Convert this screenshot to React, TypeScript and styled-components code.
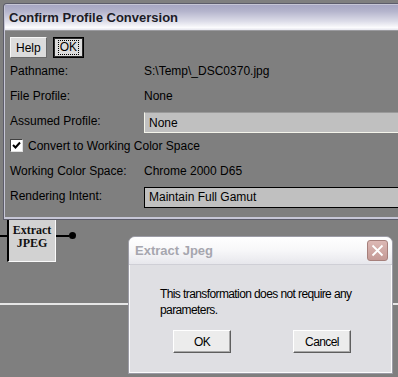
import React from 'react';
import styled, { createGlobalStyle } from 'styled-components';

const GlobalStyle = createGlobalStyle`
  html, body {
    margin: 0;
    padding: 0;
  }
  body {
    width: 398px;
    height: 377px;
    overflow: hidden;
    background: #7f7f7f;
    font-family: "Liberation Sans", Arial, sans-serif;
  }
`;

const Screen = styled.div`
  position: relative;
  width: 398px;
  height: 377px;
  overflow: hidden;
  padding: 4px 0 0 4px;
  box-sizing: border-box;
`;

const ProfileWindow = styled.div`
  width: 430px;
  border: 1px solid #c6c6d6;
  border-bottom-width: 2px;
  border-radius: 3px 3px 0 0;
  box-shadow: 0 0 0 1px #5c5c6a;
  background: #7f7f7f;
`;

const TitleBar = styled.div`
  height: 25px;
  display: flex;
  align-items: center;
  padding-left: 4px;
  border-bottom: 1px solid #9a9a9e;
  background: linear-gradient(#a6a6c2 0%, #b4b4cc 25%, #dcdce8 65%, #fbfbfd 90%, #e6e6ee 100%);
  font-size: 13px;
  font-weight: bold;
  color: #1c1c26;
`;

const Body = styled.div`
  padding: 6px 0 9px 5px;
`;

const Toolbar = styled.div`
  display: flex;
  gap: 6px;
  height: 21px;
`;

const ToolButton = styled.div<{ $focused?: boolean }>`
  height: 21px;
  box-sizing: border-box;
  display: flex;
  align-items: center;
  justify-content: center;
  padding: 0 5px;
  font-size: 12px;
  color: #000;
  background: #dcdcdc;
  border: 1px solid;
  border-color: ${p => (p.$focused ? '#000' : '#f6f6f6 #6a6a6a #6a6a6a #f6f6f6')};
  ${p => p.$focused && 'outline: 1px solid #2a2a2a; outline-offset: -2px;'}
`;

const FocusText = styled.span`
  outline: 1px dotted #000;
  line-height: 13px;
  padding: 0 1px;
`;

const Form = styled.div`
  display: grid;
  grid-template-columns: 134px 1fr;
  grid-auto-rows: 25px;
  align-items: center;
  font-size: 12px;
  color: #000;
`;

const Label = styled.div`
  white-space: nowrap;
`;

const Value = styled.div`
  white-space: nowrap;
`;

const Select = styled.div<{ $framed?: boolean }>`
  height: 21px;
  box-sizing: border-box;
  display: flex;
  align-items: center;
  padding-left: 4px;
  margin-top: ${p => (p.$framed ? '3px' : '4px')};
  background: #c0c0c0;
  border: 1px solid;
  border-color: ${p => (p.$framed ? '#000' : '#9a9a9a #c0c0c0 #f4f4ea #f4f4ea')};
  white-space: nowrap;
`;

const CheckRow = styled.label`
  grid-column: 1 / span 2;
  display: flex;
  align-items: center;
  gap: 5px;
`;

const CheckBox = styled.span`
  width: 13px;
  height: 13px;
  box-sizing: border-box;
  background: #fff;
  border: 1px solid;
  border-color: #404040 #e0e0e0 #e0e0e0 #404040;
  display: flex;
  align-items: center;
  justify-content: center;
`;

const Canvas = styled.div`
  padding-top: 1px;
`;

const NodeRow = styled.div`
  display: flex;
  align-items: flex-start;
  margin-left: -4px;
`;

const Stub = styled.div<{ $w: number }>`
  width: ${p => p.$w}px;
  height: 2px;
  margin-top: 15px;
  background: #000;
`;

const Node = styled.div`
  width: 49px;
  height: 42px;
  box-sizing: border-box;
  border-left: 2px solid #000;
  border-right: 1px solid #fafafa;
  border-bottom: 1px solid #fafafa;
  background: #d2d2d2;
  display: flex;
  flex-direction: column;
  align-items: center;
  padding-top: 4px;
  font-family: "Liberation Serif", "Times New Roman", serif;
  font-weight: bold;
  font-size: 12px;
  line-height: 13px;
  color: #111;
`;

const Dot = styled.div`
  width: 7px;
  height: 7px;
  margin-top: 12px;
  border-radius: 50%;
  background: #000;
`;

const Wire = styled.div`
  height: 2px;
  margin-top: 41px;
  margin-left: -4px;
  width: 402px;
  background: #e6e6e6;
`;

const Dialog = styled.div`
  position: absolute;
  left: 128px;
  top: 236px;
  width: 265px;
  height: 138px;
  box-sizing: border-box;
  border: 1px solid #9c9ca6;
  border-radius: 7px 7px 0 0;
  background: #dfdfe3;
  display: flex;
  flex-direction: column;
  overflow: hidden;
`;

const DialogTitle = styled.div`
  height: 27px;
  flex: none;
  display: flex;
  align-items: center;
  justify-content: space-between;
  padding: 0 4px 0 6px;
  background: linear-gradient(#ffffff 0%, #f7f7f9 50%, #e7e7ec 100%);
  border-bottom: 1px solid #cfcfd6;
  font-size: 13px;
  font-weight: bold;
  color: #a6a6ae;
`;

const CloseButton = styled.div`
  width: 21px;
  height: 21px;
  box-sizing: border-box;
  border: 1px solid #a6807c;
  border-radius: 3px;
  background: linear-gradient(#dcb8b4, #c49a96);
  display: flex;
  align-items: center;
  justify-content: center;
`;

const DialogBody = styled.div`
  flex: 1;
  border: 1px solid #fbfbfb;
  border-top: none;
  padding: 21px 0 0 30px;
  font-size: 12px;
  letter-spacing: -0.6px;
  line-height: 16px;
  color: #000;
`;

const DialogActions = styled.div`
  display: flex;
  gap: 62px;
  margin-top: 12px;
  padding-left: 13px;
`;

const PushButton = styled.div`
  width: 58px;
  height: 23px;
  box-sizing: border-box;
  display: flex;
  align-items: center;
  justify-content: center;
  background: #ececec;
  border: 1px solid;
  border-color: #ffffff #5e5e5e #5e5e5e #ffffff;
  box-shadow: inset -1px -1px 0 #a8a8a8;
  font-size: 12px;
  letter-spacing: -0.6px;
`;

const App: React.FC = () => {
  return (
    <Screen>
      <GlobalStyle />
      <ProfileWindow>
        <TitleBar>Confirm Profile Conversion</TitleBar>
        <Body>
          <Toolbar>
            <ToolButton>Help</ToolButton>
            <ToolButton $focused>
              <FocusText>OK</FocusText>
            </ToolButton>
          </Toolbar>
          <Form>
            <Label>Pathname:</Label>
            <Value>S:\Temp\_DSC0370.jpg</Value>
            <Label>File Profile:</Label>
            <Value>None</Value>
            <Label>Assumed Profile:</Label>
            <Select>None</Select>
            <CheckRow>
              <CheckBox>
                <svg width="9" height="9" viewBox="0 0 9 9">
                  <path d="M1 4 L3.5 6.5 L8 1.5" fill="none" stroke="#000" strokeWidth="2" />
                </svg>
              </CheckBox>
              Convert to Working Color Space
            </CheckRow>
            <Label>Working Color Space:</Label>
            <Value>Chrome 2000 D65</Value>
            <Label>Rendering Intent:</Label>
            <Select $framed>Maintain Full Gamut</Select>
          </Form>
        </Body>
      </ProfileWindow>

      <Canvas>
        <NodeRow>
          <Stub $w={7} />
          <Node>
            <span>Extract</span>
            <span>JPEG</span>
          </Node>
          <Stub $w={13} />
          <Dot />
        </NodeRow>
        <Wire />
      </Canvas>

      <Dialog>
        <DialogTitle>
          Extract Jpeg
          <CloseButton>
            <svg width="13" height="13" viewBox="0 0 13 13">
              <path d="M1.5 1.5 L11.5 11.5 M11.5 1.5 L1.5 11.5" stroke="#fff" strokeWidth="1.8" />
            </svg>
          </CloseButton>
        </DialogTitle>
        <DialogBody>
          This transformation does not require any
          <br />
          parameters.
          <DialogActions>
            <PushButton>OK</PushButton>
            <PushButton>Cancel</PushButton>
          </DialogActions>
        </DialogBody>
      </Dialog>
    </Screen>
  );
};

export default App;
